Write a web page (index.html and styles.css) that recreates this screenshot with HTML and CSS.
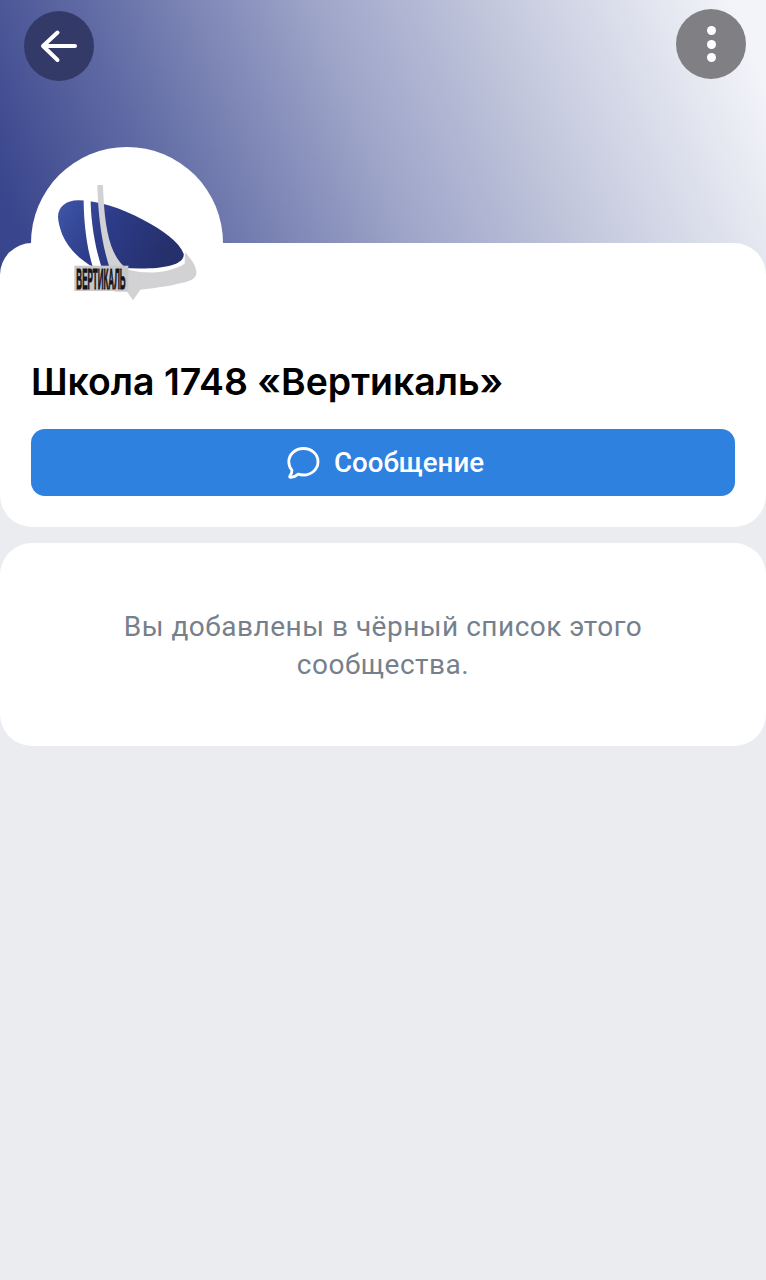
FILE: index.html
```html
<!DOCTYPE html>
<html lang="ru">
<head>
<meta charset="utf-8">
<title>Школа 1748 «Вертикаль»</title>
<link rel="stylesheet" href="styles.css">
</head>
<body>
<div class="page">
  <header class="cover">
    <button class="round back" aria-label="Назад">
      <svg width="70" height="70" viewBox="0 0 70 70" fill="none" stroke="#fff" stroke-width="4" stroke-linecap="round" stroke-linejoin="round"><path d="M51 35H19M33.500 21.500L19 35L33.500 49"/></svg>
    </button>
    <button class="round more" aria-label="Ещё">
      <span class="dot"></span><span class="dot"></span><span class="dot"></span>
    </button>
  </header>
  <section class="card profile">
    <div class="avatar">
      <svg class="logo" width="150" height="120" viewBox="0 0 450 360">
        <defs>
          <linearGradient id="ell" x1="0" y1="0" x2="1" y2="0.300">
            <stop offset="0" stop-color="#3f56a8"/>
            <stop offset=".45" stop-color="#2d3c8a"/>
            <stop offset="1" stop-color="#25306c"/>
          </linearGradient>
        </defs>
        <path d="M15 100C16 72 40 52 75 52C130 52 205 75 270 110C330 142 378 175 392 212C396 240 350 254 290 256C240 258 190 254 150 252H120C80 230 45 195 28 155C20 135 15 115 15 100Z" fill="url(#ell)"/>
        <path d="M92 50H113C113 100 122 180 146 254H120C100 190 92 110 92 50Z" fill="#fff"/>
        <path d="M133 6H150C152 60 155 130 175 190C186 220 200 240 222 258C262 272 340 276 395 242L396 208C418 230 432 255 430 272C428 290 405 296 375 302C335 312 290 316 262 320L240 352L222 326L185 326L170 255C145 180 135 90 133 6Z" fill="#d2d2d5"/>
        <rect x="64" y="248" width="162" height="76" fill="#c8c8ca"/>
        <text class="logo-text" transform="translate(70 318) scale(.28 1)">ВЕРТИКАЛЬ</text>
      </svg>
    </div>
    <h1 class="title">Школа 1748 «Вертикаль»</h1>
    <button class="message">
      <svg width="36" height="36" viewBox="0 0 36 36" fill="none" stroke="#fff" stroke-width="2.800" stroke-linejoin="round" stroke-linecap="round"><path d="M18.500 3.500C26.500 3.500 33 9.300 33 16.800C33 24.300 26.500 30 18.500 30C16.500 30 14.800 29.700 13.200 29.100C10.800 31.200 8.300 32.300 5.700 32.400C4.700 32.400 4.300 31.500 4.900 30.800C6.300 29.300 7 27.500 6.900 25.200C4.900 22.900 3.800 20 3.800 16.800C3.800 9.300 10.400 3.500 18.500 3.500Z"/></svg>
      <span>Сообщение</span>
    </button>
  </section>
  <section class="card notice">
    <p class="notice-text">Вы добавлены в чёрный список этого сообщества.</p>
  </section>
</div>
</body>
</html>
```

FILE: styles.css
```css
* { box-sizing: border-box; }
html, body { margin: 0; padding: 0; }
body { background: #eaecf0; font-family: Roboto, "Liberation Sans", sans-serif; }
.page { width: 766px; height: 1280px; overflow: hidden; background: #eaecf0; }
.cover {
  height: 283px;
  padding: 0 20px 0 24px;
  display: flex;
  justify-content: space-between;
  align-items: flex-start;
  background: linear-gradient(68deg, #39458c 4%, #5f6aa4 22%, #9da4c8 48%, #c5cade 70%, #f3f4f9 96%);
}
.round {
  width: 70px;
  height: 70px;
  border: 0;
  padding: 0;
  border-radius: 50%;
  display: flex;
  flex-direction: column;
  align-items: center;
  justify-content: center;
}
.back { background: #343a68; margin-top: 11px; }
.more { background: #808084; margin-top: 9px; gap: 4.500px; }
.dot { width: 9px; height: 9px; background: #fff; border-radius: 50%; }
.card { background: #fff; border-radius: 32px; }
.profile {
  position: relative;
  margin-top: -40px;
  height: 284px;
  padding: 115px 31px 0;
}
.avatar {
  position: absolute;
  left: 31px;
  top: -96px;
  width: 192px;
  height: 192px;
  border-radius: 50%;
  background: #fff;
}
.logo { position: absolute; left: 22px; top: 36px; }
.logo-text { font-family: "Liberation Sans", sans-serif; font-size: 86px; font-weight: 700; fill: #15151a; stroke: #15151a; stroke-width: 3px; }
.title {
  margin: 0;
  font-family: Inter, Roboto, sans-serif;
  font-size: 37.400px;
  line-height: 48px;
  font-weight: 600;
  color: #000;
  white-space: nowrap;
}
.message {
  margin-top: 23px;
  width: 704px;
  height: 67px;
  border: 0;
  border-radius: 14px;
  background: #2f81e0;
  color: #fff;
  display: flex;
  align-items: center;
  justify-content: center;
  gap: 13px;
  padding: 0 0 0 3px;
  font-family: Roboto, sans-serif;
  font-size: 27.700px;
  font-weight: 500;
}
.notice {
  margin-top: 16px;
  height: 203px;
  padding: 65px 100px 0;
}
.notice-text {
  margin: 0;
  text-align: center;
  font-size: 28px;
  line-height: 38px;
  letter-spacing: .5px;
  color: #76808c;
}
```
